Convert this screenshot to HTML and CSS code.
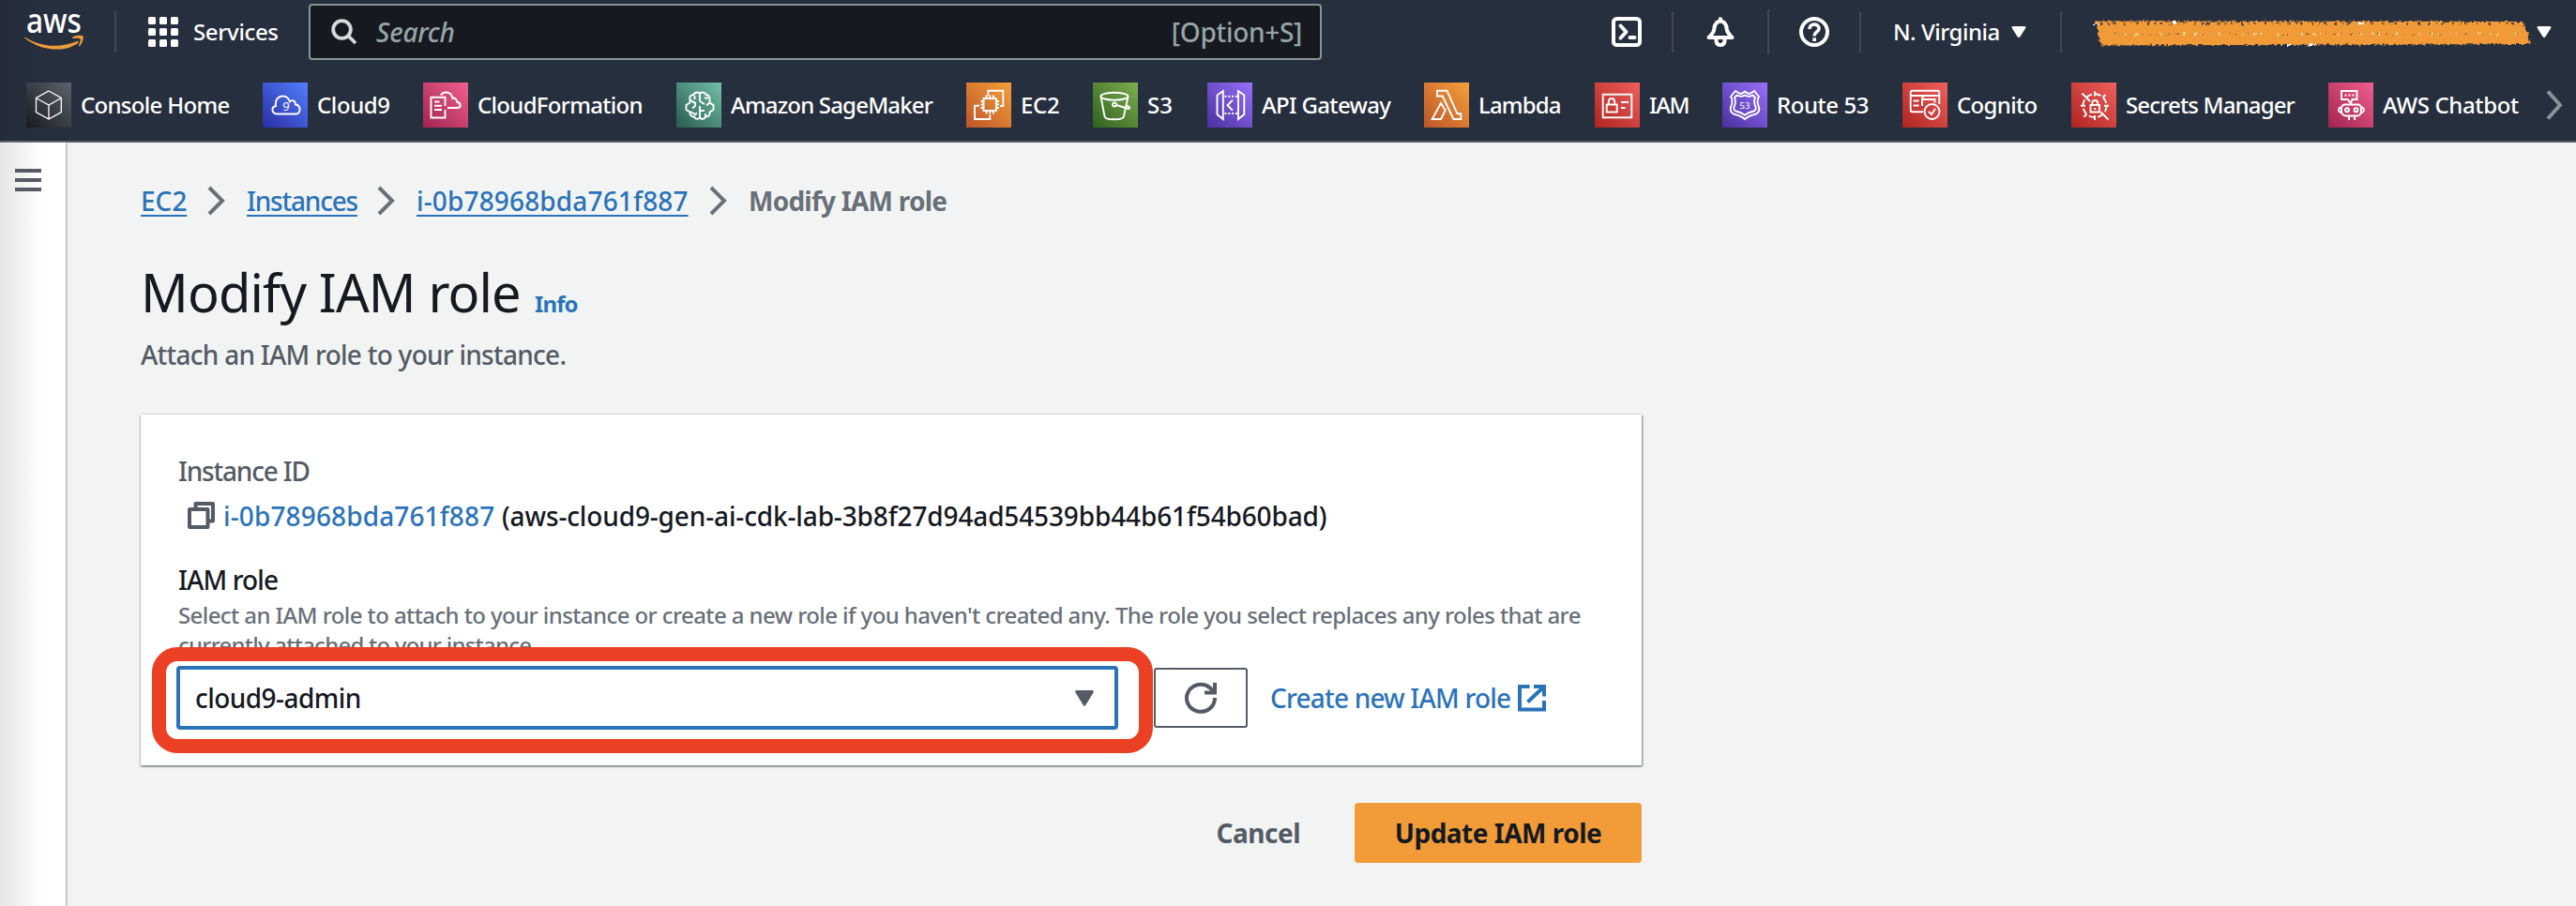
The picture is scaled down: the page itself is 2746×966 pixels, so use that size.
FILE: index.html
```
<!DOCTYPE html>
<html lang="en">
<head>
<meta charset="utf-8">
<title>Modify IAM role | EC2</title>
<link rel="stylesheet" href="styles.css">
</head>
<body>
<header class="nav">
  <div class="top">
    <svg class="logo" width="64" height="44" viewBox="0 0 64 44"><text x="2" y="22.5" font-size="37" textLength="59" lengthAdjust="spacingAndGlyphs" fill="#fff">aws</text><path d="M.5 27.5C18 39 39 39 56 32C57.500 31.400 58.500 32.800 57 34C44 44 18 43 .3 28.500C-.4 27.800 0 27.200 .5 27.500Z" fill="#ec9b3b"/><path d="M51.500 27.500C54 25.500 61.500 25 62.500 26.500C63.500 28 62 34.500 58.800 37C58 37.500 57.500 37 58 36.200C59 34 60.200 30.500 59.500 29.500C58.500 28.300 54.500 28.800 52 29C51 29 50.800 28 51.500 27.500Z" fill="#ec9b3b"/></svg>
    <span class="rule r1"></span>
    <div class="services"><svg width="32" height="32" viewBox="0 0 32 32" fill="#fff"><g id="row"><rect width="8" height="8" rx="1.500"/><rect x="12" width="8" height="8" rx="1.500"/><rect x="24" width="8" height="8" rx="1.500"/></g><use href="#row" y="12"/><use href="#row" y="24"/></svg><span>Services</span></div>
    <div class="search"><svg width="28" height="28" viewBox="0 0 28 28" fill="none" stroke="#d5dbdb" stroke-width="3.800"><circle cx="11.500" cy="11.500" r="9.300"/><path d="M18 18L26 26"/></svg><span class="ph">Search</span><span class="key">[Option+S]</span></div>
    <div class="tools">
      <svg width="32" height="32" viewBox="0 0 32 32" fill="none" stroke="#fff" stroke-width="4"><rect x="2" y="2" width="28" height="28" rx="3.500"/><path d="M9.500 9.500L15.500 16L9.500 22.500M19.500 22H24.500" stroke-linecap="round" stroke-linejoin="round"/></svg>
      <span class="rule"></span>
      <svg width="32" height="32" viewBox="0 0 32 32" fill="none" stroke="#fff" stroke-width="4" stroke-linejoin="round"><path d="M16 .5V4"/><path d="M16 4.500C11 5 9.500 9 9.300 13C9 17.500 5.500 19.500 3.500 22H28.500C26.500 19.500 23 17.500 22.700 13C22.500 9 21 5 16 4.500Z"/><path d="M11.500 23V26Q12 30 16 30Q20 30 20.500 26V23"/></svg>
      <span class="rule tall"></span>
      <svg width="32" height="32" viewBox="0 0 32 32" fill="none" stroke="#fff"><circle cx="16" cy="16" r="14" stroke-width="4"/><path d="M11 13C10.500 6.500 21 6.500 21 12.500C21 16 16 16 16 20.500" stroke-width="3.600"/><rect x="14.300" y="22.300" width="3.700" height="3.700" fill="#fff" stroke="none"/></svg>
      <span class="rule"></span>
      <span class="region">N. Virginia</span>
      <svg class="caret" width="16" height="12" viewBox="0 0 16 12"><path d="M1.500 0H14.500Q16 .5 15.200 2L9.500 11Q8 13 6.500 11L.8 2Q0 .5 1.500 0Z" fill="#fff"/></svg>
      <span class="rule r5"></span>
      <svg class="scribble" width="470" height="32" viewBox="0 0 470 32"><defs><filter id="rough" x="-2%" y="-20%" width="104%" height="140%"><feTurbulence type="fractalNoise" baseFrequency=".3" numOctaves="3" seed="4"/><feDisplacementMap in="SourceGraphic" scale="5" xChannelSelector="R" yChannelSelector="G"/></filter></defs><g filter="url(#rough)"><path d="M-1 3.500L455 4L457 11L461 16L463 28L5 29.500L3 20L1 9Z" fill="#f19a38"/><path d="M5 6H455" stroke="#262f3e" stroke-width="1.300" stroke-dasharray="2 6 1 4 3 9"/><path d="M20 17.500H450" stroke="#8a6330" stroke-width="1.200" stroke-dasharray="2 7 3 4 1 11"/><path d="M30 17.500H450" stroke="#ffe0b0" stroke-width="1.800" stroke-dasharray="2 10 3 5 1 17 2 23"/><path d="M-2 7H2M82 5H86M280 6H286M205 29H209M228 29H235" stroke="#fff" stroke-width="2"/></g></svg>
      <svg class="caret" width="16" height="12" viewBox="0 0 16 12"><path d="M1.500 0H14.500Q16 .5 15.200 2L9.500 11Q8 13 6.500 11L.8 2Q0 .5 1.500 0Z" fill="#fff"/></svg>
    </div>
  </div>
  <nav class="favs">
    <a class="fav console"><svg viewBox="0 0 48 48"><path d="M24 9L37.300 16.500V31.500L24 39L10.500 31.500V16.500ZM10.500 16.500L24 24L37.300 16.500M24 24V39" stroke-width="1.300"/></svg><span>Console Home</span></a>
    <a class="fav cloud9"><svg viewBox="0 0 48 48"><path d="M15.500 33.500C9 33 9 26 14 25C13 18 17 14.500 21.500 14.500C26 14.500 28 17.500 29 20.500C31 18 35 19 35 23.500C41 24 41 33.500 35.500 33.500Z"/><text x="25" y="29.700" font-size="13">9</text></svg><span>Cloud9</span></a>
    <a class="fav cfn"><svg viewBox="0 0 48 48"><path d="M23.500 25V15.800H8.500V37.500H23.500V29M12 20.500H17.500M12 24.700H20M12 29H20M19 13.500C21 9 30 9 31.500 17C33 16 36 17 36 20.500C41 22 41 27 36 27H26"/></svg><span>CloudFormation</span></a>
    <a class="fav sage"><svg viewBox="0 0 48 48"><path d="M25 11.500C21.500 9.500 19 11 18.500 13C15 13 13.500 15 14.500 18.500V21.500L10.500 24V29L14.500 31.500C14 34.500 16 36.500 19 36.500C20.500 39.500 23.500 39.500 25 37.500C27 39.500 30.500 39 31 36.500C34.500 36.500 36 34.500 35.500 31.500L39.500 29V24L35.500 21.500V18.500C36 15 34.500 13 31.500 13C31 10.500 28 9.500 25 11.500ZM25 11.500V20M25 25V37.500M19.500 14V18M15 18.500L19 21.500H21M20 21.500V25L17 27.500M15 31L20 34L22 32.500M25 20L30 23M30 16.500H34M35.500 21.500L32 24.500M25 30H30M31 36.500V33"/></svg><span>Amazon SageMaker</span></a>
    <a class="fav ec2"><svg viewBox="0 0 48 48"><path d="M23.300 14V8.700H39.300V25H36M14 24.700H9V39H25.300V34.500"/><rect x="18.500" y="17" width="13.500" height="13"/><path d="M21.500 17V13.500M25.300 17V13.500M29 17V13.500M21.500 30V33.500M25.300 30V33.500M29 30V33.500M18.500 20H15.500M18.500 23.500H15.500M18.500 27H15.500M32 20H35M32 23.500H35M32 27H35"/></svg><span>EC2</span></a>
    <a class="fav s3"><svg viewBox="0 0 48 48"><ellipse cx="23" cy="14.700" rx="14.500" ry="4"/><path d="M8.500 15L12.500 36Q12.500 39.300 22.500 39.300Q33 39.300 33 36L37.500 15M25 24L38 28Q40 27.500 38.500 26L35 23.500"/><circle cx="23" cy="23.500" r="2"/></svg><span>S3</span></a>
    <a class="fav api"><svg viewBox="0 0 48 48"><path d="M10.500 13.500L16.800 9V39L10.500 34ZM39.300 13.500L33 9V39L39.300 34ZM27 18.700L21.500 24.300L27 29.700"/><path d="M18.500 14.700H32M18.500 33H32" stroke-dasharray="2 1.800"/></svg><span>API Gateway</span></a>
    <a class="fav lambda"><svg viewBox="0 0 48 48"><path d="M14 8.700H24.500L35.500 33.300H39.300V39H31.500L19.700 14.500H14ZM18 22L22.700 29.500L18 39H8.700Z"/></svg><span>Lambda</span></a>
    <a class="fav iam"><svg viewBox="0 0 48 48"><rect x="8.700" y="12.700" width="30.600" height="24.600"/><rect x="12.700" y="23.500" width="11" height="8"/><path d="M14.800 23V20Q15 17 18 17Q21 17 21.200 20V23M28 21H36M28 27H32.500"/></svg><span>IAM</span></a>
    <a class="fav r53"><svg viewBox="0 0 48 48"><path d="M14 9L18 11.500Q21 12.500 24 9.500Q27 12.500 30 11.500L34 9L39 15Q36 20 39 26Q40.500 31 36 33.500Q28 35.500 24 39Q20 35.500 12 33.500Q7.500 31 9 26Q12 20 9 15Z"/><path d="M15.500 13.500Q20 16 24 13.500Q28 16 32.500 13.500L35 16Q33 20.500 35.500 26Q36.500 29.500 33.500 30.500Q27.500 32 24 34.700Q20.500 32 14.500 30.500Q11.500 29.500 12.500 26Q15 20.500 13 16Z"/><text x="24" y="27.800" font-size="9.500">53</text></svg><span>Route 53</span></a>
    <a class="fav cognito"><svg viewBox="0 0 48 48"><path d="M22 31.300H10.500Q8.700 31.300 8.700 29.500V10.500Q8.700 8.700 10.500 8.700H37.500Q39.300 8.700 39.300 10.500V23M8.700 14H39M21 25V17.500Q21 14 24.500 14M21 18H34.500V21.500M11.500 19.500H17.500M11.500 24.500H17.500"/><circle cx="31.500" cy="31" r="8"/><path d="M28 31L31 34L35 28"/></svg><span>Cognito</span></a>
    <a class="fav secrets"><svg viewBox="0 0 48 48"><circle cx="25" cy="24.700" r="12.500" stroke-dasharray="6.500 3.300"/><rect x="20.500" y="24" width="9.500" height="7.500"/><path d="M22.300 24V21.500Q22.500 19 25.200 19Q28 19 28.200 21.500V24M25 9.500V14.500M25 35V40M10 24.700H15M35 24.700H40M11.500 11.500L20 20M31.500 31.500L39.500 39.500M36.500 13L33.500 16M13.500 36.500L16.500 33.500M25.200 27V29"/></svg><span>Secrets Manager</span></a>
    <a class="fav chatbot"><svg viewBox="0 0 48 48"><path d="M14 9H30.500V18H25.500L24 22L20.500 18H14ZM17 23.500H32Q34.500 24 35 27V31Q34.500 35 31 35.500H18.500Q14.500 35 14 31V27Q14.500 24 17 23.500M13.500 26Q8.500 29 13.500 32.500M35.500 26Q40.500 29 35.500 32.500M22 35.500V40M28 35.500V40"/><circle cx="20" cy="29.300" r="2"/><circle cx="29.500" cy="29.300" r="2"/><path d="M17.500 13.500H28" stroke-dasharray="2 2"/></svg><span>AWS Chatbot</span></a>
    <svg class="more" width="20" height="32" viewBox="0 0 20 32"><path d="M3 1.500L16 16L3 30.500" fill="none" stroke="#879596" stroke-width="4"/></svg>
  </nav>
</header>
<div class="body">
  <aside class="side"><i></i><i></i><i></i></aside>
  <main class="main">
    <div class="crumbs">
      <a class="c1">EC2</a><svg viewBox="0 0 20 32"><path d="M2 2L16 16L2 30"/></svg>
      <a class="c2">Instances</a><svg viewBox="0 0 20 32"><path d="M2 2L16 16L2 30"/></svg>
      <a class="c3">i-0b78968bda761f887</a><svg viewBox="0 0 20 32"><path d="M2 2L16 16L2 30"/></svg>
      <b>Modify IAM role</b>
    </div>
    <div class="title"><h1>Modify IAM role</h1><a>Info</a></div>
    <p class="sub">Attach an IAM role to your instance.</p>
    <section class="card">
      <div class="label">Instance ID</div>
      <div class="instance"><svg width="29" height="29" viewBox="0 0 29 29" fill="none" stroke="#545b64" stroke-width="4" stroke-linejoin="round"><path d="M8.500 7V2H27V20.500H23"/><rect x="2" y="8" width="19.500" height="19"/></svg><a>i-0b78968bda761f887</a><span>(aws-cloud9-gen-ai-cdk-lab-3b8f27d94ad54539bb44b61f54b60bad)</span></div>
      <div class="field">IAM role</div>
      <p class="hint"><span class="h1">Select an IAM role to attach to your instance or create a new role if you haven't created any. The role you select replaces any roles that are</span><br><span class="h2">currently attached to your instance.</span></p>
      <div class="controls">
        <div class="select"><span>cloud9-admin</span><svg width="20" height="17" viewBox="0 0 20 17"><path d="M1.500 0H18.500Q20.500 .5 19.500 2.500L11.500 15.500Q10 18 8.500 15.500L.5 2.500Q-.5 .5 1.500 0Z" fill="#545b64"/></svg><div class="mark"></div></div>
        <div class="refresh"><svg width="34" height="34" viewBox="0 0 34 34" fill="none" stroke="#545b64" stroke-width="4"><path d="M32 17A15 14.500 0 1 1 27 6.500L31 11"/><path d="M32 1V11.500H21"/></svg></div>
        <a class="create">Create new IAM role</a>
        <svg class="ext" width="30" height="29" viewBox="0 0 30 29" fill="none" stroke="#2b73b8" stroke-width="4"><path d="M12.500 2H2V26.500H28V17"/><path d="M17 2H28V12.500M27.500 2.500L10.500 18.500"/></svg>
      </div>
    </section>
    <div class="actions"><a class="cancel">Cancel</a><button class="update">Update IAM role</button></div>
  </main>
</div>
</body>
</html>
```
FILE: styles.css
```
* { box-sizing: border-box; }
body { margin: 0; width: 2746px; height: 966px; overflow: hidden; background: #f2f4f4; color: #16191f; font: 500 28px/36px "Noto Sans", "Open Sans", sans-serif; white-space: nowrap; }
svg { flex: none; display: block; }
.nav { height: 152px; background: linear-gradient(90deg, #232c38 0, #262f3e 44px); border-bottom: 2px solid #545b64; color: #fff; font-size: 24px; }
.top { height: 68px; display: flex; align-items: flex-start; padding-left: 26px; }
.logo { margin-top: 12px; overflow: visible; }
.rule { flex: none; width: 2px; height: 44px; margin-top: 12px; background: #414750; }
.r1 { margin-left: 32px; }
.services { display: flex; gap: 16px; align-items: flex-start; margin: 18px 0 0 34px; width: 171px; }
.services span { line-height: 32px; letter-spacing: -.35px; }
.search { display: flex; align-items: center; width: 1080px; height: 60px; margin-top: 4px; padding: 0 19px 0 22px; border: 2px solid #879596; border-radius: 4px; background: #16191f; color: #95a5a6; font-size: 28px; }
.search .ph { margin-left: 20px; font-style: italic; letter-spacing: -.2px; }
.search .key { margin-left: auto; letter-spacing: -.3px; }
.tools { display: flex; align-items: flex-start; margin-left: 309px; }
.tools > svg { margin-top: 18px; }
.tools > .rule { margin-left: 32px; margin-right: 34px; }
.tools > .rule.tall { height: 48px; margin-top: 10px; margin-left: 34px; margin-right: 32px; }
.tools .region { margin-top: 18px; line-height: 32px; width: 126px; letter-spacing: -.5px; }
.tools .caret { margin-top: 28px; }
.tools > .rule.r5 { margin-left: 36px; margin-right: 36px; }
.tools .scribble { margin-top: 19px; overflow: visible; }
.favs { display: grid; grid-template-columns: 252px 171px 270px 309px 135px 122px 231px 182px 136px 192px 180px 274px 230px auto; padding: 20px 0 0 28px; align-items: center; justify-content: start; }
.fav { display: flex; align-items: center; gap: 10px; }
.fav svg { width: 48px; height: 48px; fill: none; stroke: #fff; stroke-width: 1.900; }
.fav svg text { fill: #fff; stroke: none; text-anchor: middle; font-weight: 400; }
.fav span { line-height: 46px; }
.more { margin-left: 1px; }
.console svg { background: linear-gradient(45deg, #161a20, #5c646d); }
.cloud9 svg { background: linear-gradient(45deg, #2a2ea3, #527fff); }
.cfn svg, .chatbot svg { background: linear-gradient(45deg, #a1244e, #f0608f); }
.sage svg { background: linear-gradient(45deg, #285c4c, #74bfa8); }
.ec2 svg, .lambda svg { background: linear-gradient(45deg, #bc552b, #f5a03a); }
.s3 svg { background: linear-gradient(45deg, #2f611e, #7dae50); }
.api svg, .r53 svg { background: linear-gradient(45deg, #4930a0, #9870f8); }
.iam svg, .cognito svg, .secrets svg { background: linear-gradient(45deg, #ad2420, #f0605c); }
.console span { letter-spacing: -.7px; }
.cloud9 span { letter-spacing: -.4px; }
.cfn span { letter-spacing: -.7px; }
.sage span { letter-spacing: -.82px; }
.ec2 span { letter-spacing: -.3px; }
.api span { letter-spacing: -.65px; }
.lambda span { letter-spacing: -.85px; }
.iam span { letter-spacing: -1.300px; }
.r53 span { letter-spacing: -.45px; }
.cognito span { letter-spacing: -.65px; }
.secrets span { letter-spacing: -.85px; }
.chatbot span { letter-spacing: -.35px; }
.body { display: flex; height: 814px; }
.side { flex: none; width: 70px; padding: 28px 0 0 16px; display: flex; flex-direction: column; gap: 6px; background: linear-gradient(90deg, #e6e6e6 0, #fff 46px); box-shadow: 1px 0 2px #9aa3a3; }
.side i { width: 28px; height: 4px; background: #545b64; }
.main { width: 1600px; margin-left: 80px; padding-top: 44px; }
a { color: #2b73b8; }
.fav { color: #fff; }
.crumbs { display: flex; align-items: center; height: 36px; color: #687078; }
.crumbs a { text-decoration: underline; text-decoration-thickness: 2px; text-underline-offset: 4px; text-decoration-skip-ink: none; }
.crumbs svg { width: 20px; height: 32px; margin: -1px 22px 0 22px; fill: none; stroke: #687078; stroke-width: 4; }
.c1 { width: 49px; }
.c2 { width: 117px; letter-spacing: -1.200px; }
.c3 { width: 290px; letter-spacing: .15px; }
.crumbs b { font-weight: 700; letter-spacing: -.75px; }
.title { display: flex; align-items: baseline; height: 72px; margin-top: 43px; line-height: 72px; }
.title h1 { margin: 0; width: 420px; font-size: 56px; font-weight: 400; letter-spacing: -.88px; }
.title a { font-size: 24px; font-weight: 700; letter-spacing: -.9px; }
.sub { margin: 13px 0 0; color: #545b64; letter-spacing: -.74px; }
.card { margin-top: 46px; height: 374px; padding: 42px 40px 0; background: #fff; box-shadow: 0 1px 2px #687078, 1px 1px 2px #98a1a1, 0 -1px 1px #e4e8e8; }
.label { color: #545b64; letter-spacing: -1.200px; }
.instance { display: flex; align-items: center; margin: 12px 0 0 10px; }
.instance svg { margin-top: -2px; }
.instance a { margin-left: 9px; width: 297px; letter-spacing: .13px; }
.instance span { letter-spacing: -.14px; }
.field { margin-top: 32px; letter-spacing: -.9px; }
.hint { margin: 4px 0 0; font-size: 24px; line-height: 32px; color: #687078; }
.h1 { letter-spacing: -.59px; }
.h2 { letter-spacing: -.77px; }
.controls { display: flex; align-items: center; height: 68px; margin: 6px 0 0 -2px; }
.select { position: relative; width: 1004px; height: 68px; padding: 0 22px 0 16px; border: 4px solid #2b73b8; border-radius: 4px; display: flex; align-items: center; justify-content: space-between; letter-spacing: -.55px; }
.mark { position: absolute; left: -30px; top: -24px; width: 1067px; height: 113px; border: 15px solid #ec4024; border-radius: 27px; }
.refresh { margin-left: 38px; width: 100px; height: 64px; border: 2px solid #545b64; border-radius: 3px; display: grid; place-items: center; }
.create { margin-left: 24px; width: 264px; letter-spacing: -.8px; }
.actions { display: flex; justify-content: flex-end; align-items: center; gap: 58px; margin-top: 40px; }
.cancel { color: #545b64; font-weight: 700; letter-spacing: -.5px; }
.update { width: 306px; height: 64px; padding: 0; border: 0; border-radius: 4px; background: #f19c38; color: #16191f; font: inherit; font-weight: 700; letter-spacing: -.5px; }
```
